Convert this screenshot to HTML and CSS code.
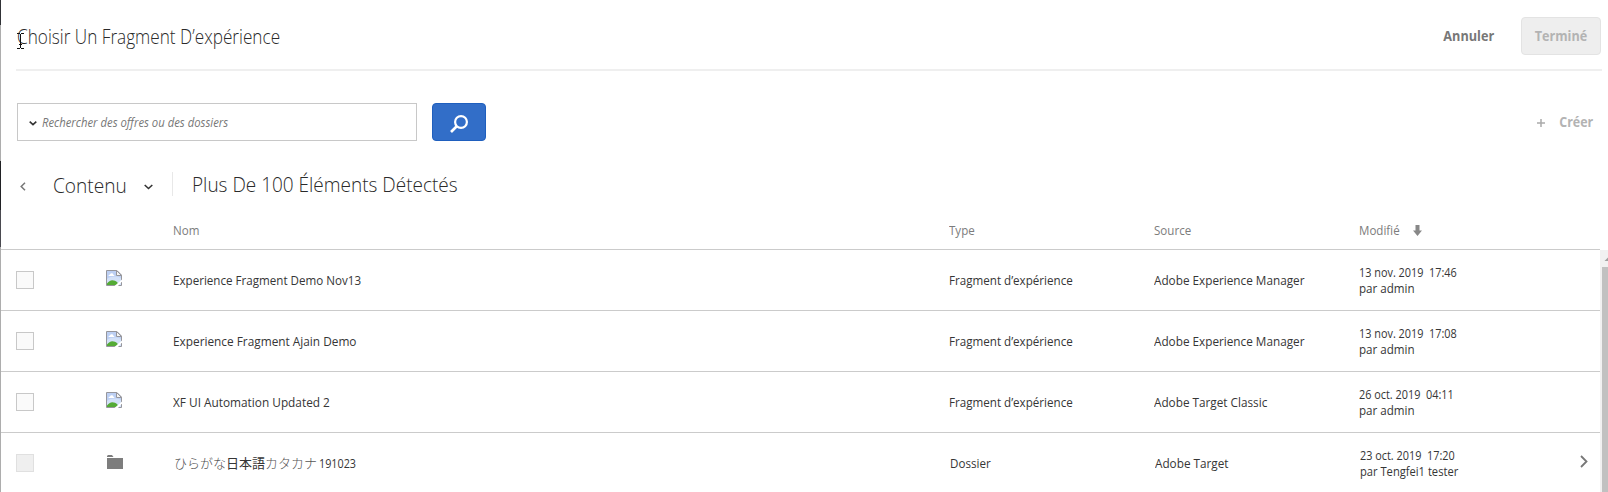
FILE: index.html
```
<!DOCTYPE html>
<html lang="fr">
<head>
<meta charset="utf-8">
<title>Choisir un fragment d’expérience</title>
<link rel="stylesheet" href="styles.css">
</head>
<body>
<svg class="defs" width="0" height="0">
  <symbol id="broken" viewBox="0 0 16 16">
    <path d="M.5.5H11L15.500 5v10.500H.5z" fill="#bccff3" stroke="#96969c"/>
    <path d="M1 9c4-3 10-3 14-1v7H1z" fill="#d3e1f8"/>
    <path d="M2.500 6q0-1.500 1.500-1.500Q4.500 3 6 3.300 7.500 3.500 7.500 5 8.500 5.200 8.500 6z" fill="#fff"/>
    <path d="M1 15v-1.500c2-3 5-4.200 8-2.700 2 1 3 2.200 4 4.200z" fill="#54ab35"/>
    <path d="M10.500.5V5.500h5z" fill="#f4f4f4" stroke="#96969c"/>
    <path d="M11.500 0H16v4.500z" fill="#fff"/>
    <path d="M8.500 16 16 9.500v2L12 16z" fill="#fff"/>
  </symbol>
</svg>
<div class="edge"><i class="e1"></i><i class="e2"></i><i class="e3"></i><i class="e4"></i><i class="e5"></i></div>
<main class="dialog">
  <header class="top">
    <h1 class="title">Choisir Un Fragment D’expérience</h1>
    <div class="actions"><span class="cancel">Annuler</span><div class="done"><span>Terminé</span></div></div>
  </header>
  <div class="search">
    <div class="field">
      <svg width="8" height="5" viewBox="0 0 8 5"><path d="M.7.7 4 3.700 7.300.7" fill="none" stroke="#333" stroke-width="1.600"/></svg>
      <span class="placeholder">Rechercher des offres ou des dossiers</span>
    </div>
    <div class="go"><svg width="18" height="18" viewBox="0 0 18 18" fill="none" stroke="#fff"><circle cx="11" cy="7" r="5.900" stroke-width="2.200"/><path d="M7 11 1 17" stroke-width="2.600"/></svg></div>
    <div class="create"><svg width="8" height="8" viewBox="0 0 8 8"><path d="M4 0v8M0 4h8" stroke="#aaa" stroke-width="1.500"/></svg><span>Créer</span></div>
  </div>
  <nav class="crumbs">
    <svg class="back" width="6" height="9" viewBox="0 0 6 9"><path d="M5 .7 1.200 4.500 5 8.300" fill="none" stroke="#777" stroke-width="1.500"/></svg>
    <span class="where">Contenu</span>
    <svg class="drop" width="9" height="6" viewBox="0 0 9 6"><path d="M.7 1 4.500 4.500 8.300 1" fill="none" stroke="#333" stroke-width="1.600"/></svg>
    <div class="count"><span>Plus De 100 Éléments Détectés</span></div>
  </nav>
  <div class="row head">
    <i></i><i></i><span>Nom</span><span>Type</span><span>Source</span>
    <div class="sort"><span>Modifié</span><svg width="9" height="11" viewBox="0 0 9 11"><path d="M2.500 0h4v5.500H9L4.500 11 0 5.500h2.500z" fill="#888"/></svg></div><i></i>
  </div>
  <div class="list">
    <div class="rows">
      <div class="row"><i class="check"></i><svg class="thumb" width="16" height="16"><use href="#broken"/></svg><span>Experience Fragment Demo Nov13</span><span>Fragment d’expérience</span><span class="src">Adobe Experience Manager</span><div class="date"><span class="day">13 nov. 2019&nbsp; 17:46</span><span>par admin</span></div><i></i></div>
      <div class="row"><i class="check"></i><svg class="thumb" width="16" height="16"><use href="#broken"/></svg><span class="wide">Experience Fragment Ajain Demo</span><span>Fragment d’expérience</span><span class="src">Adobe Experience Manager</span><div class="date"><span class="day">13 nov. 2019&nbsp; 17:08</span><span>par admin</span></div><i></i></div>
      <div class="row"><i class="check"></i><svg class="thumb" width="16" height="16"><use href="#broken"/></svg><span class="wide">XF UI Automation Updated 2</span><span>Fragment d’expérience</span><span class="src">Adobe Target Classic</span><div class="date"><span class="day">26 oct. 2019&nbsp; 04:11</span><span>par admin</span></div><i></i></div>
      <div class="row folder"><i class="check off"></i><svg class="dir" width="16" height="14" viewBox="0 0 16 14"><path d="M0 2V1l1-1h4l1.500 2z M0 3h16v11H0z" fill="#7d7d7d"/></svg><div class="jp"><b class="kana">ひらがな</b><b class="kanji">日本語</b><b class="kana">カタカナ</b><span class="num">191023</span></div><span class="in">Dossier</span><span class="src in">Adobe Target</span><div class="date in"><span class="day">23 oct. 2019&nbsp; 17:20</span><span class="long">par Tengfei1 tester</span></div><svg class="next" width="8" height="13" viewBox="0 0 8 13"><path d="M1 1 6.500 6.500 1 12" fill="none" stroke="#777" stroke-width="1.800"/></svg></div>
    </div>
    <div class="scroll"><svg width="6" height="17" viewBox="0 0 6 17"><path d="M2.500 11 6.500 7v4z" fill="#a0a0a0"/></svg><i></i></div>
  </div>
</main>
<svg class="cursor" width="7" height="16" viewBox="0 0 7 16"><path d="M0 .5h3M4 .5h3M0 15.500h3M4 15.500h3M3.500 1v14M2 11.500h3" stroke="#111" fill="none"/></svg>
</body>
</html>
```
FILE: styles.css
```
* { box-sizing: border-box; }
body { margin: 0; height: 492px; overflow: hidden; display: flex; background: #fff; color: #363636; font: 13px "Open Sans", "Noto Sans CJK JP", sans-serif; white-space: nowrap; }
svg { display: block; flex: none; }
.defs { position: absolute; }
.edge { width: 1px; display: flex; flex-direction: column; flex: none; }
.edge i { display: block; }
.e1 { height: 25px; background: #303236; }
.e2 { height: 136px; background: #adadad; }
.e3 { height: 49px; background: #202124; }
.e4 { height: 37px; background: #4a4a50; }
.e5 { flex: 1; background: #adadad; }
.dialog { width: 1607px; height: 492px; display: flex; flex-direction: column; }
.top { height: 71px; margin: 0 6px 0 15px; padding-top: 17px; border-bottom: 2px solid #efefef; display: flex; justify-content: space-between; flex: none; }
.title { margin: 0 0 0 1px; font-size: 20px; font-weight: 300; line-height: 40px; color: #2a2a2a; transform: scaleX(.859); transform-origin: 0 50%; }
.actions { display: flex; align-items: flex-start; font-size: 14px; font-weight: 700; padding-right: 1px; line-height: 36px; }
.cancel { color: #777; margin-right: 27px; line-height: 37px; transform: scaleX(.905); transform-origin: 100% 50%; }
.done { width: 80px; height: 38px; border: 1px solid #e3e3e3; border-radius: 4px; background: #eee; color: #b3b3b3; text-align: center; }
.done span { display: block; transform: scaleX(.9); }
.search { margin: 32px 0 0 16px; height: 38px; display: flex; align-items: center; flex: none; }
.field { width: 400px; height: 38px; border: 1px solid #c8c8c8; display: flex; align-items: center; padding: 0 0 0 11px; }
.field svg { margin-top: 3px; }
.placeholder { margin-left: 5px; font-style: italic; color: #777; transform: scaleX(.87); transform-origin: 0 50%; }
.go { margin-left: 15px; width: 54px; height: 38px; border: 1px solid #1f5fbe; border-radius: 4px; background: #326ec8; display: flex; align-items: center; justify-content: center; }
.go svg { margin-top: 3px; }
.create { margin: 0 15px 0 auto; display: flex; align-items: center; gap: 10px; color: #b3b3b3; font-size: 14px; font-weight: 700; }
.create svg { margin-top: 2px; }
.create span { margin-top: -1px; transform: scaleX(.89); transform-origin: 100% 50%; }
.crumbs { margin: 16px 0 0 19px; height: 54px; display: flex; align-items: center; font-size: 21px; font-weight: 300; color: #2a2a2a; flex: none; }
.back { margin-top: 4px; }
.where { margin-left: 27px; margin-right: 10px; width: 81px; line-height: 28px; padding-top: 1px; transform: scaleX(.91); transform-origin: 0 50%; }
.drop { margin-top: 5px; }
.count { margin-left: 19px; padding-left: 19px; height: 24px; line-height: 25px; border-left: 1px solid #e8e8e8; }
.count span { display: block; transform: scaleX(.904); transform-origin: 0 50%; }
.row { height: 61px; padding-left: 15px; border-bottom: 1px solid #cbcbcb; display: grid; grid-template-columns: 90px 67px 776px 205px 205px 220px 1fr; align-items: center; }
.row span { transform: scaleX(.893); transform-origin: 0 50%; }
.row .src { transform: scaleX(.904); }
.row .wide { transform: scaleX(.91); }
.head { height: 39px; width: 1599px; color: #7c7c7c; flex: none; }
.head span { transform: scaleX(.89); }
.sort { display: flex; align-items: center; gap: 8px; }
.list { display: flex; flex: 1; min-height: 0; overflow: hidden; }
.rows { width: 1599px; }
.check { width: 18px; height: 18px; border: 1px solid #c8c8c8; background: #fafafa; }
.check.off { border-color: #e0e0e0; background: #efefef; }
.thumb { margin-bottom: 4px; }
.date { line-height: 16px; }
.date span { display: block; }
.row .day { transform: scaleX(.836); }
.row .long { transform: scaleX(.858); }
.in, .dir { margin-left: 1px; }
.dir { margin-bottom: 2px; }
.jp { display: flex; align-items: baseline; padding-left: 1px; line-height: 20px; }
.kana, .kanji { font-family: "Noto Sans CJK JP", sans-serif; font-size: 13px; line-height: 18px; font-weight: 400; }
.kana { font-weight: 300; color: #555; }
.row .num { margin-left: 2px; transform: scaleX(.83); }
.next { margin: 0 0 3px 1px; }
.scroll { width: 8px; background: #f1f1f1; padding-left: 2px; display: flex; flex-direction: column; }
.scroll i { flex: 1; background: #c1c1c1; }
.cursor { position: absolute; left: 17px; top: 33px; }
```
